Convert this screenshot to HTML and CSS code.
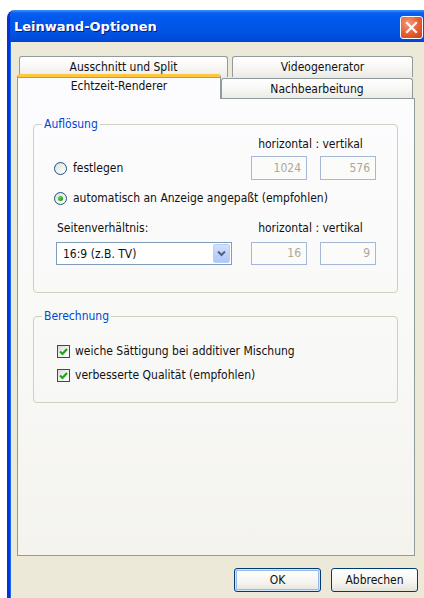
FILE: index.html
```html
<!DOCTYPE html>
<html lang="de">
<head>
<meta charset="utf-8">
<title>Leinwand-Optionen</title>
<link rel="stylesheet" href="styles.css">
</head>
<body>
<div class="window">
  <div class="titlebar">
    <span class="title">Leinwand-Optionen</span>
    <button class="close" type="button" aria-label="Schließen">
      <svg width="21" height="21" viewBox="0 0 21 21">
        <path d="M6 6 L15 15 M15 6 L6 15" stroke="#fff" stroke-width="2.2" stroke-linecap="square" fill="none"/>
      </svg>
    </button>
  </div>
  <div class="client">
    <div class="tabs">
      <div class="tabrow back">
        <div class="tab t-split">Ausschnitt und Split</div>
        <div class="tab t-video">Videogenerator</div>
      </div>
      <div class="tabrow front">
        <div class="tab t-render selected">Echtzeit-Renderer</div>
        <div class="tab t-post">Nachbearbeitung</div>
      </div>
    </div>

    <div class="page">
      <fieldset class="group g-res">
        <legend>Auflösung</legend>
        <div class="row r-head">
          <span class="hv">horizontal : vertikal</span>
        </div>
        <div class="row r-fix">
          <label class="opt"><span class="radio"></span>festlegen</label>
          <div class="pair">
            <span class="field">1024</span>
            <span class="field">576</span>
          </div>
        </div>
        <div class="row r-auto">
          <label class="opt"><span class="radio on"></span>automatisch an Anzeige angepaßt (empfohlen)</label>
        </div>
        <div class="row r-head2">
          <span class="aspect-label">Seitenverhältnis:</span>
          <span class="hv">horizontal : vertikal</span>
        </div>
        <div class="row r-aspect">
          <div class="combo">
            <span class="combo-text">16:9 (z.B. TV)</span>
            <span class="combo-btn">
              <svg width="9" height="7" viewBox="0 0 9 7"><path d="M1 1.5 L4.5 5 L8 1.5" stroke="#4d6185" stroke-width="2" fill="none"/></svg>
            </span>
          </div>
          <div class="pair">
            <span class="field">16</span>
            <span class="field">9</span>
          </div>
        </div>
      </fieldset>

      <fieldset class="group g-calc">
        <legend>Berechnung</legend>
        <label class="check"><span class="box"><svg width="11" height="11" viewBox="0 0 11 11"><path d="M2 5.5 L4.5 8 L9 3" stroke="#21a121" stroke-width="2.2" fill="none"/></svg></span>weiche Sättigung bei additiver Mischung</label>
        <label class="check"><span class="box"><svg width="11" height="11" viewBox="0 0 11 11"><path d="M2 5.5 L4.5 8 L9 3" stroke="#21a121" stroke-width="2.2" fill="none"/></svg></span>verbesserte Qualität (empfohlen)</label>
      </fieldset>
    </div>

    <div class="buttons">
      <button class="btn default" type="button">OK</button>
      <button class="btn" type="button">Abbrechen</button>
    </div>
  </div>
</div>
</body>
</html>
```
FILE: styles.css
```css
html, body {
  margin: 0;
  padding: 0;
  background: #ffffff;
  overflow: hidden;
}

body {
  font-family: "DejaVu Sans Condensed", "DejaVu Sans", sans-serif;
  font-size: 12px;
  color: #111;
}

/* window frame */
.window {
  margin: 10px 0 0 7px;
  width: 424px;
  height: 600px;
  border-left: 3px solid #0831d9;
  border-top-left-radius: 8px;
  background: #ece9d8;
  box-shadow: inset 1px 0 0 #166aee;
  overflow: hidden;
}

.titlebar {
  height: 32px;
  display: flex;
  align-items: center;
  padding-left: 4px;
  background: linear-gradient(to bottom,
    #3d95ff 0px, #0a5ff0 3px, #0058ee 8px, #0055e5 20px, #004ddc 28px, #0043cf 32px);
}

.title {
  color: #fff;
  font-family: "DejaVu Sans", "Liberation Sans", sans-serif;
  font-weight: bold;
  font-size: 13px;
  text-shadow: 1px 1px 0 #0a1883;
  flex: 1;
}

.close {
  box-sizing: border-box;
  width: 23px;
  height: 23px;
  margin: 3px 11px 0 0;
  padding: 0;
  border: 1px solid #ffffff;
  border-radius: 3px;
  background: radial-gradient(circle at 35% 30%, #f59a7c 0%, #e35d34 55%, #c4411c 100%);
  display: flex;
  align-items: center;
  justify-content: center;
}

.close svg { display: block; }

.client {
  padding: 14px 0 0 7px;
}

/* tab strip, two rows */
.tabs {
  display: flex;
  flex-direction: column;
}

.tabrow {
  display: flex;
}

.tab {
  box-sizing: border-box;
  border: 1px solid #919b9c;
  border-bottom: none;
  border-radius: 3px 3px 0 0;
  background: linear-gradient(to bottom, #ffffff 0%, #f7f7f5 50%, #ecebe6 100%);
  text-align: center;
  line-height: 18px;
}

.back { height: 22px; }
.back .tab { height: 21px; line-height: 21px; }
.t-split { margin-left: 2px; width: 209px; }
.t-video { margin-left: 4px; width: 181px; }

.front { height: 20px; }
.t-post { width: 192px; height: 20px; line-height: 20px; }

.tab.selected {
  position: relative;
  z-index: 2;
  width: 204px;
  height: 25px;
  margin-top: -4px;
  background: #fcfcfe;
  border-top: 3px solid #ffc83c;
  box-shadow: inset 0 1px 0 #e68b2c;
  line-height: 18px;
}

/* tab page */
.page {
  box-sizing: border-box;
  width: 398px;
  height: 458px;
  border: 1px solid #919b9c;
  background: linear-gradient(to bottom, #fcfcfe 0%, #f8f8f6 60%, #f4f3ee 100%);
  padding: 0 0 0 15px;
  display: flex;
  flex-direction: column;
}

.group {
  box-sizing: border-box;
  width: 365px;
  margin: 0;
  border: 1px solid #d0d0bf;
  border-radius: 4px;
  padding: 0 21px 0 0;
  min-width: 0;
}

.group legend {
  color: #0046d5;
  margin-left: 8px;
  padding: 0 2px;
  line-height: 14px;
}

.g-res {
  margin-top: 18px;
  height: 176px;
}

.g-calc {
  margin-top: 16px;
  height: 94px;
}

.row {
  display: flex;
  align-items: center;
}

.r-head {
  justify-content: flex-end;
  margin-top: 6px;
  height: 14px;
}

.hv {
  width: 125px;
  text-align: center;
  margin-right: 3px;
}

.r-fix {
  margin-top: 5px;
  height: 24px;
  justify-content: space-between;
}

.r-auto {
  margin-top: 9px;
  height: 18px;
}

.r-head2 {
  margin-top: 14px;
  height: 14px;
  justify-content: space-between;
}

.r-aspect {
  margin-top: 7px;
  height: 23px;
  justify-content: space-between;
}

.opt {
  display: flex;
  align-items: center;
  padding-left: 20px;
}

.radio {
  box-sizing: border-box;
  width: 13px;
  height: 13px;
  margin-right: 6px;
  border: 1px solid #1c5180;
  border-radius: 50%;
  background: linear-gradient(135deg, #dcdcd7 0%, #f0f0ec 50%, #ffffff 100%);
  display: flex;
  align-items: center;
  justify-content: center;
}

.radio.on::after {
  content: "";
  width: 5px;
  height: 5px;
  border-radius: 50%;
  background: radial-gradient(circle at 35% 35%, #55d751 0%, #21a121 70%);
}

.aspect-label {
  padding-left: 23px;
}

.pair {
  display: flex;
  gap: 13px;
}

.field {
  box-sizing: border-box;
  width: 56px;
  height: 24px;
  border: 1px solid #a5b9d6;
  background: #fbfbf9;
  color: #aca899;
  text-align: right;
  padding-right: 5px;
  line-height: 22px;
}

.r-aspect .field { height: 23px; line-height: 21px; }

.combo {
  box-sizing: border-box;
  margin-left: 22px;
  width: 176px;
  height: 23px;
  border: 1px solid #7f9db9;
  background: #fff;
  display: flex;
  align-items: center;
  justify-content: space-between;
  padding: 1px;
}

.combo-text {
  padding-left: 5px;
}

.combo-btn {
  box-sizing: border-box;
  width: 17px;
  height: 19px;
  border: 1px solid #b9cdf7;
  border-radius: 2px;
  background: linear-gradient(to bottom, #d3e0fd 0%, #c1d3fb 50%, #b1c7f8 100%);
  display: flex;
  align-items: center;
  justify-content: center;
}

.check {
  display: flex;
  align-items: center;
  padding-left: 23px;
  height: 16px;
}

.check:first-of-type { margin-top: 20px; }
.check + .check { margin-top: 8px; }

.box {
  box-sizing: border-box;
  width: 13px;
  height: 13px;
  margin-right: 5px;
  border: 1px solid #1c5180;
  background: linear-gradient(135deg, #dcdcd7 0%, #f0f0ec 50%, #ffffff 100%);
  display: flex;
  align-items: center;
  justify-content: center;
}

.box svg { display: block; }

/* dialog buttons */
.buttons {
  display: flex;
  gap: 10px;
  padding-left: 217px;
  margin-top: 12px;
}

.btn {
  box-sizing: border-box;
  width: 87px;
  height: 24px;
  border: 1px solid #003c74;
  border-radius: 3px;
  background: linear-gradient(to bottom, #ffffff 0%, #f5f4ef 60%, #e3e2da 100%);
  font-family: "DejaVu Sans Condensed", "DejaVu Sans", sans-serif;
  font-size: 12px;
  color: #111;
  padding: 0;
}

.btn.default {
  box-shadow: inset 0 0 0 1px #cee7ff, inset 0 0 0 2px #98b8ea;
}
```
